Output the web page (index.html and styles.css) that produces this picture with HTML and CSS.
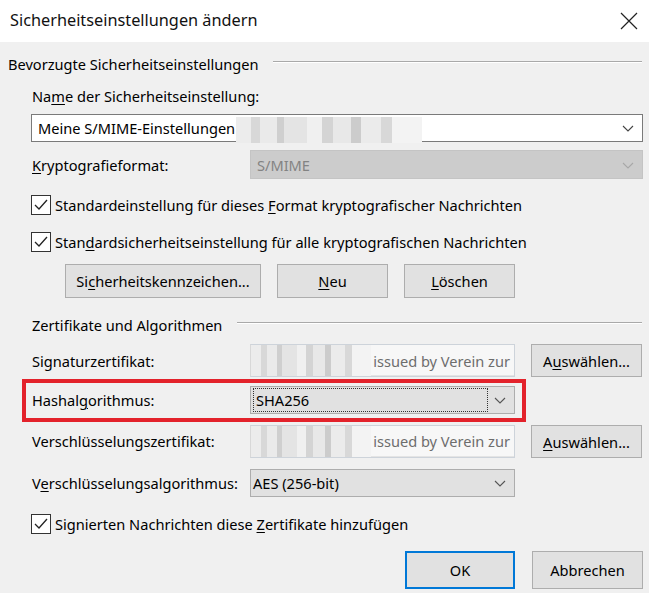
FILE: index.html
```html
<!DOCTYPE html>
<html lang="de">
<head>
<meta charset="utf-8">
<title>Sicherheitseinstellungen ändern</title>
<link rel="stylesheet" href="styles.css">
</head>
<body>
<div class="dialog">
  <div class="titlebar">
    <span class="title">Sicherheitseinstellungen ändern</span>
    <svg class="close" width="18" height="18" viewBox="0 0 18 18"><path d="M1 1 L17 17 M17 1 L1 17" stroke="#222" stroke-width="1.2" fill="none"/></svg>
  </div>
  <div class="body">
    <div class="legend l1"><span>Bevorzugte Sicherheitseinstellungen</span><i class="rule"></i></div>
    <div class="lbl namelbl">Na<u>m</u>e der Sicherheitseinstellung:</div>
    <div class="combo wide">
      <span class="ctext">Meine S/MIME-Einstellungen</span><span class="blur b1"></span>
      <svg class="chev" width="12" height="7" viewBox="0 0 12 7"><path d="M1 1 L6 6 L11 1" stroke="#444" stroke-width="1.1" fill="none"/></svg>
    </div>
    <div class="frow krypto">
      <span class="lbl"><u>K</u>ryptografieformat:</span>
      <div class="combo disabled">
        <span class="ctext">S/MIME</span>
        <svg class="chev" width="12" height="7" viewBox="0 0 12 7"><path d="M1 1 L6 6 L11 1" stroke="#a8a8a8" stroke-width="1.1" fill="none"/></svg>
      </div>
    </div>
    <div class="check c1">
      <span class="box"><svg width="18" height="18" viewBox="0 0 18 18"><path d="M3 9 L7 13 L15 4" stroke="#222" stroke-width="1.3" fill="none"/></svg></span>
      <span>Standardeinstellung für dieses <u>F</u>ormat kryptografischer Nachrichten</span>
    </div>
    <div class="check c2">
      <span class="box"><svg width="18" height="18" viewBox="0 0 18 18"><path d="M3 9 L7 13 L15 4" stroke="#222" stroke-width="1.3" fill="none"/></svg></span>
      <span>Stan<u>d</u>ardsicherheitseinstellung für alle kryptografischen Nachrichten</span>
    </div>
    <div class="btnrow">
      <button class="btn bsk">Si<u>c</u>herheitskennzeichen...</button>
      <button class="btn bsm"><u>N</u>eu</button>
      <button class="btn bsm"><u>L</u>öschen</button>
    </div>
    <div class="legend l2"><span>Zertifikate und Algorithmen</span><i class="rule"></i></div>
    <div class="frow sig">
      <span class="lbl">Signaturzertifikat:</span>
      <div class="field"><span class="blur b2"></span><span class="ftext">issued by Verein zur</span></div>
      <button class="btn bsel">A<u>u</u>swählen...</button>
    </div>
    <div class="redbox">
      <div class="frow inner">
        <span class="lbl">Hashal<u>g</u>orithmus:</span>
        <div class="combo gray">
          <span class="focus">SHA256</span>
          <svg class="chev" width="12" height="7" viewBox="0 0 12 7"><path d="M1 1 L6 6 L11 1" stroke="#555" stroke-width="1.1" fill="none"/></svg>
        </div>
      </div>
    </div>
    <div class="frow enc">
      <span class="lbl">Verschlüsselungszertifikat:</span>
      <div class="field"><span class="blur b3"></span><span class="ftext">issued by Verein zur</span></div>
      <button class="btn bsel"><u>A</u>uswählen...</button>
    </div>
    <div class="frow alg">
      <span class="lbl">V<u>e</u>rschlüsselungsalgorithmus:</span>
      <div class="combo gray">
        <span class="ctext">AES (256-bit)</span>
        <svg class="chev" width="12" height="7" viewBox="0 0 12 7"><path d="M1 1 L6 6 L11 1" stroke="#555" stroke-width="1.1" fill="none"/></svg>
      </div>
    </div>
    <div class="check c3">
      <span class="box"><svg width="18" height="18" viewBox="0 0 18 18"><path d="M3 9 L7 13 L15 4" stroke="#222" stroke-width="1.3" fill="none"/></svg></span>
      <span>Signierten Nachrichten diese <u>Z</u>ertifikate hinzufügen</span>
    </div>
    <div class="footer">
      <button class="btn bfoot ok">OK</button>
      <button class="btn bfoot">Abbrechen</button>
    </div>
  </div>
</div>
</body>
</html>
```
FILE: styles.css
```css
* { box-sizing: border-box; }
html, body { margin: 0; padding: 0; }
body {
  width: 649px;
  height: 593px;
  overflow: hidden;
  background: #f0f0f0;
  font-family: "Segoe UI", "Noto Sans", "DejaVu Sans", sans-serif;
  font-size: 14.6px;
  color: #000;
}
u { text-decoration-thickness: 1px; text-underline-offset: 2px; }
.dialog { width: 649px; height: 593px; }

.titlebar {
  height: 42px;
  background: #fff;
  display: flex;
  align-items: center;
  justify-content: space-between;
  padding: 0 11px 2px 10px;
}
.title { font-size: 16.3px; color: #111; }
.close { display: block; margin-top: 2px; }

.body { padding: 0; }

.legend {
  display: flex;
  align-items: center;
  height: 20px;
  margin-right: 7px;
}
.legend .rule {
  flex: 1;
  height: 1px;
  background: #a9a9a9;
  margin-left: 15px;
  position: relative;
  top: -3px;
  box-shadow: 0 1px 0 #fff;
}
.l1 { margin-top: 12px; margin-left: 8px; }
.l2 { margin-top: 17px; margin-left: 32px; }

.lbl { white-space: nowrap; }
.namelbl { margin-top: 12px; margin-left: 32px; height: 20px; line-height: 20px; }

.combo {
  position: relative;
  display: flex;
  align-items: center;
  height: 28px;
  border: 1px solid #7a7a7a;
  background: #fff;
  padding-left: 6px;
  white-space: nowrap;
}
.combo .chev { position: absolute; right: 8px; top: 50%; margin-top: -3px; }
.wide { margin: 8px 6px 0 31px; }
.disabled {
  height: 29px;
  width: 393px;
  grid-column: 2 / span 2;
  background: #cccccc;
  border-color: #c4c4c4;
  color: #838383;
}
.gray { background: #e1e1e1; border-color: #adadad; padding-left: 2px; }

.blur {
  display: block;
  height: 26px;
  background:
    linear-gradient(90deg,
      #ececec 0 8%, #d8d8d8 8% 13%, #eaeaea 13% 22%, #cfcfcf 22% 26%, #e4e4e4 26% 38%,
      #f0f0f0 38% 46%, #d4d4d4 46% 52%, #e8e8e8 52% 62%, #cccccc 62% 67%, #ebebeb 67% 78%,
      #d8d8d8 78% 84%, #f3f3f3 84% 100%);
}
.b1 { width: 186px; margin-left: 1px; margin-top: 4px; }
.b2, .b3 { width: 120px; height: 31px; flex: none; }

.frow {
  display: grid;
  grid-template-columns: 202px 265px 111px;
  column-gap: 16px;
  align-items: center;
  margin-left: 32px;
}
.krypto { margin-top: 8px; height: 29px; }

.check {
  display: flex;
  align-items: center;
  height: 20px;
  margin-left: 31px;
  white-space: nowrap;
}
.check .box {
  width: 20px;
  height: 20px;
  border: 1px solid #333;
  background: #fff;
  display: flex;
  align-items: center;
  justify-content: center;
  margin-right: 4px;
  flex: none;
}
.c1 { margin-top: 16px; }
.c2 { margin-top: 17px; }
.c3 { margin-top: 17px; }

.btn {
  font-family: inherit;
  font-size: 14.6px;
  color: #000;
  background: #e1e1e1;
  border: 1px solid #adadad;
  padding: 0;
  margin: 0;
  height: 34px;
  white-space: nowrap;
}
.btnrow { display: flex; gap: 16px; margin-top: 12px; margin-left: 65px; }
.bsk { width: 196px; }
.bsm { width: 111px; }

.sig { margin-top: 9px; height: 33px; }
.field {
  height: 33px;
  border: 1px solid #cdd3da;
  border-left-color: #d8d8d8;
  background: #f7f7f7;
  display: flex;
  align-items: center;
  overflow: hidden;
  box-shadow: inset 1px -1px 0 #e4e4e4;
}
.ftext { color: #6d6d6d; margin-left: auto; padding-right: 4px; white-space: nowrap; }
.bsel { height: 33px; }

.redbox {
  margin-top: 2px;
  margin-left: 22px;
  width: 504px;
  height: 43px;
  border: 4px solid #e3222b;
  padding: 3px 0 0 6px;
}
.inner { margin-left: 0; grid-template-columns: 202px 265px; }
.focus {
  display: block;
  width: 235px;
  height: 24px;
  line-height: 22px;
  border: 1px dotted #333;
  padding-left: 2px;
}

.enc { margin-top: 2px; height: 34px; }
.enc .field { height: 33px; }
.enc .bsel { margin-top: 1px; }
.alg { margin-top: 11px; }

.footer {
  display: flex;
  gap: 17px;
  margin-top: 17px;
  margin-left: 405px;
}
.bfoot { width: 111px; height: 38px; }
.ok { width: 110px; border: 2px solid #0078d7; }
```
